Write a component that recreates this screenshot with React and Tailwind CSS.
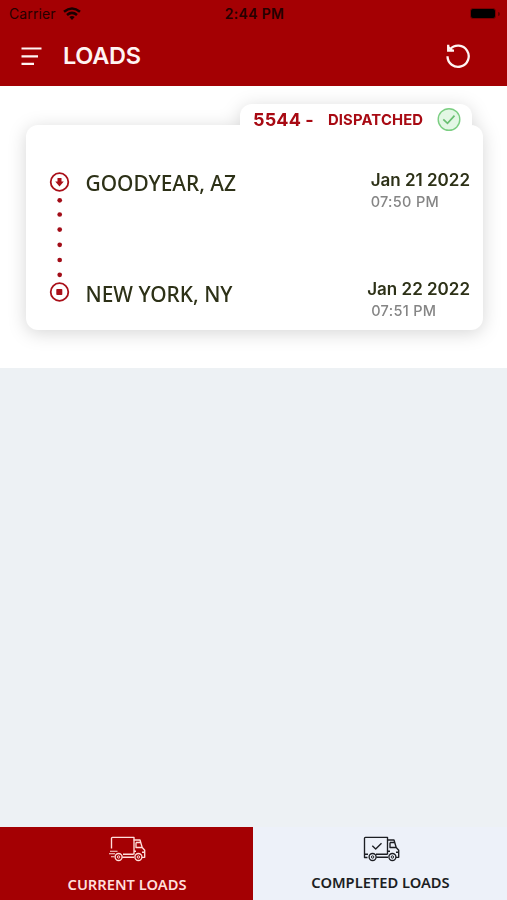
import React from "react";

function StatusBar() {
  return (
    <div className="flex h-[27px] items-center text-[13.5px] leading-none text-[#250000]">
      <div className="flex flex-1 items-center gap-[7px] pl-[9px]">
        <span className="text-[14px] tracking-[0.1px]">Carrier</span>
        <svg width="18" height="13" viewBox="0 0 18 13" fill="none" stroke="#180000" strokeWidth="2.5">
          <path d="M1 4.8 Q9 -1.8 17 4.8" />
          <path d="M4 8 Q9 3.8 14 8" />
          <path d="M6.3 10 Q9 7.8 11.7 10 L9 13Z" fill="#180000" stroke="none" />
        </svg>
      </div>
      <span className="text-[14px] font-semibold tracking-[0.35px]">2:44 PM</span>
      <div className="flex flex-1 items-center justify-end gap-[2px] pr-[7px]">
        <span className="h-[11px] w-[26px] rounded-[3px] border border-[#7a0000] bg-black" />
        <span className="h-[4px] w-[2px] rounded-r-full bg-[#650000]" />
      </div>
    </div>
  );
}

function Header() {
  return (
    <header className="h-[86px] bg-[#a40003]">
      <StatusBar />
      <div className="flex h-[58px] items-center pl-[21px] pr-[36px]">
        <svg width="21" height="19" viewBox="0 0 21 19" fill="none" stroke="#fff4f3" strokeWidth="2.2">
          <path d="M0.5 1.5H20.5M0.5 9.3H17M0.5 16.8H13" />
        </svg>
        <h1 className="ml-[21px] flex-1 text-[23.5px] leading-none font-semibold text-[#fff4f3]">
          <span className="inline-block tracking-[-0.25px]">LOADS</span>
        </h1>
        <svg width="26" height="26" viewBox="0 0 26 26" fill="none" stroke="#fff4f3" strokeWidth="2.3">
          <path d="M2.5 13.2A10.6 10.6 0 1 0 5.1 6.3" />
          <path d="M3.2 1.8V7.6H9" />
          <path d="M3.2 4L7 7.6" />
        </svg>
      </div>
    </header>
  );
}

function RouteLine() {
  return (
    <svg className="shrink-0" width="21" height="132" viewBox="0 0 21 132" fill="none">
      <circle cx="10.5" cy="11" r="8.8" stroke="#a90f18" strokeWidth="1.8" />
      <path d="M8.5 7H12.5V10.5H14.8L10.5 15.5L6.2 10.5H8.5Z" fill="#a90f18" />
      {[29.3, 43.5, 58.6, 73.8, 89, 103.8].map((y) => (
        <circle key={y} cx="10.7" cy={y} r="2.35" fill="#a20d18" />
      ))}
      <circle cx="10.5" cy="121" r="8.8" stroke="#a90f18" strokeWidth="1.8" />
      <rect x="7.3" y="118" width="6" height="6" rx="0.8" fill="#a90f18" />
    </svg>
  );
}

function Stop({ place, placeClass, date, time, timeClass }) {
  return (
    <div className="flex h-[42px] justify-between">
      <div className={`font-['Noto_Sans',sans-serif] text-[20.9px] leading-[24px] font-medium text-[#2d3117] ${placeClass}`}>
        {place}
      </div>
      <div className="text-[17px] leading-[20px] font-semibold text-[#2d3117]">
        <div>{date}</div>
        <div className={`mt-[3px] text-[14.5px] leading-[18px] font-medium tracking-[0.3px] text-[#858585] ${timeClass}`}>{time}</div>
      </div>
    </div>
  );
}

function LoadCard() {
  return (
    <section className="h-[282px] bg-white pt-[18px] pl-[26px] pr-[24px]">
      <div className="drop-shadow-[0_3px_9px_rgba(0,0,0,0.16)]">
        <div className="mr-[11px] ml-auto flex h-[21px] w-[232px] rounded-t-[12px] bg-white">
          <div className="flex h-[31px] w-full items-center pr-[11px] pl-[13px] text-[#a80a13]">
            <span className="text-[18px] font-bold tracking-[0.15px]">5544 -</span>
            <span className="ml-[14px] flex-1 pt-[2px] text-[14.8px] font-bold tracking-[0.15px]">DISPATCHED</span>
            <svg width="24" height="24" viewBox="0 0 24 24" fill="none">
              <circle cx="12" cy="11.5" r="10.8" fill="#e3f7e5" stroke="#7bce82" strokeWidth="1.4" />
              <path d="M6.3 11.3L10.5 15.3L17.5 7.7" stroke="#6abf72" strokeWidth="1.7" />
            </svg>
          </div>
        </div>
        <div className="flex h-[205px] rounded-[12px] bg-white pt-[46px] pr-[13px] pl-[23px]">
          <RouteLine />
          <div className="-mt-[1px] ml-[15.5px] flex flex-1 flex-col gap-[67px]">
            <Stop place="GOODYEAR, AZ" placeClass="pt-[1px]" date="Jan 21 2022" time="07:50 PM" timeClass="" />
            <Stop place="NEW YORK, NY" placeClass="pt-[3px]" date="Jan 22 2022" time="07:51 PM" timeClass="pl-[4px]" />
          </div>
        </div>
      </div>
    </section>
  );
}

function Truck({ completed }) {
  return (
    <svg width="38" height="26" viewBox="0 0 38 26" fill="none" stroke="currentColor" strokeWidth="1.35" strokeLinejoin="round">
      {completed ? (
        <>
          <path d="M5.5 21.5H2.5V2.2Q2.5 1.3 3.4 1.3H25.5V18.5M2.5 18.2H6M14 18.2H25.5" />
          <path d="M10.3 9.8L13.7 13L19.5 7.2" />
        </>
      ) : (
        <>
          <path d="M3.5 12.5V2.2Q3.5 1.3 4.5 1.3H26V18.5M15 18.2H25.5" />
          <path d="M2 15.2H9.5M1 17.8H7M3 20.8H6.5" strokeWidth="1.1" />
        </>
      )}
      <path d="M14.3 21.2H26M25.7 4H32L34.2 11.5L36.7 14.2V21.3H34M28 6.5V11.5H34M28 6.5H32.8M28 15.2H26M34 16.2H36.5" />
      <circle cx="10.6" cy="21" r="3.5" />
      <circle cx="10.6" cy="21" r="1.2" strokeWidth="1" />
      <circle cx="30.4" cy="21" r="3.5" />
      <circle cx="30.4" cy="21" r="1.2" strokeWidth="1" />
    </svg>
  );
}

function BottomTabs() {
  return (
    <nav className="flex h-[73px] font-['Noto_Sans',sans-serif] text-[14.7px] leading-[20px] font-semibold">
      <button className="flex w-[253px] flex-col items-center bg-[#a40003] pt-[9px] text-[#ffdedb]">
        <Truck />
        <span className="mt-[12px] ml-[1px]">CURRENT LOADS</span>
      </button>
      <button className="flex flex-1 flex-col items-center bg-[#edf1f9] pt-[9px] text-[#1c1e23]">
        <span className="ml-[2px]">
          <Truck completed />
        </span>
        <span className="mt-[10px] ml-[1px]">COMPLETED LOADS</span>
      </button>
    </nav>
  );
}

export default function App() {
  return (
    <div className="flex h-[900px] w-[507px] flex-col overflow-hidden bg-[#edf1f4] font-['Inter',sans-serif]">
      <Header />
      <LoadCard />
      <main className="flex-1" />
      <BottomTabs />
    </div>
  );
}
